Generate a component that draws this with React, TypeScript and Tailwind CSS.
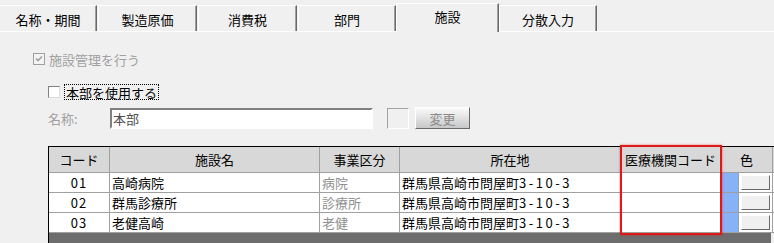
import type { ReactNode } from "react";

const rows = [
  { code: "01", name: "高崎病院", kind: "病院", addr: "群馬県高崎市問屋町", num: "3-10-3" },
  { code: "02", name: "群馬診療所", kind: "診療所", addr: "群馬県高崎市問屋町", num: "3-10-3" },
  { code: "03", name: "老健高崎", kind: "老健", addr: "群馬県高崎市問屋町", num: "3-10-3" },
];

function Tab({ label, w, ml = 0 }: { label: string; w: number; ml?: number }) {
  return (
    <div
      className="h-[26px] flex items-center justify-center border-t border-l border-white border-r border-r-[#696969] shadow-[inset_-1px_0_0_#a0a0a0]"
      style={{ width: w, marginLeft: ml }}
    >
      <span className="pt-[1px]">{label}</span>
    </div>
  );
}

function Cell({ w, className = "", children }: { w: number; className?: string; children?: ReactNode }) {
  return (
    <div
      className={`h-full shrink-0 flex items-center border-r border-[#a0a0a0] ${className}`}
      style={{ width: w }}
    >
      {children}
    </div>
  );
}

export default function App() {
  return (
    <div
      className="w-[774px] h-[243px] overflow-hidden bg-[#f0f0f0] text-[13px] leading-none text-black"
      style={{ fontFamily: '"Noto Sans CJK JP", "Noto Sans", sans-serif' }}
    >
      {/* tab strip */}
      <div className="h-[32px] flex items-end border-b border-white">
        <Tab label="名称・期間" w={98} ml={-1} />
        <Tab label="製造原価" w={99} ml={1} />
        <Tab label="消費税" w={99} ml={1} />
        <Tab label="部門" w={98} ml={1} />
        <div className="relative z-10 -mb-px h-[29px] w-[103px] flex justify-center pt-[6px] bg-[#f0f0f0] border-t border-l border-white border-r border-r-[#696969] shadow-[inset_-1px_0_0_#a0a0a0]">
          施設
        </div>
        <Tab label="分散入力" w={98} />
      </div>

      {/* 施設管理を行う */}
      <div className="mt-[21px] ml-[33px] flex items-center h-[12px] gap-[4px] text-[#a0a0a0]">
        <div className="w-[12px] h-[12px] border border-[#a0a0a0] bg-[#f4f4f4] flex items-center justify-center">
          <svg width="8" height="8" viewBox="0 0 8 8">
            <path d="M1 3.5 L3 5.5 L7 1.5" stroke="#a0a0a0" strokeWidth="1.6" fill="none" />
          </svg>
        </div>
        <span>施設管理を行う</span>
      </div>

      {/* 本部を使用する */}
      <div className="mt-[19px] ml-[48px] flex items-center h-[16px] gap-[4px]">
        <div className="w-[12px] h-[12px] border border-[#808080] border-r-[#dcdcdc] border-b-[#dcdcdc] bg-white" />
        <span className="h-[16px] px-[1px] flex items-center border border-dotted border-black">本部を使用する</span>
      </div>

      {/* 名称 */}
      <div className="mt-[8px] ml-[48px] flex items-center h-[21px]">
        <span className="w-[62px] text-[#a0a0a0]">名称:</span>
        <div className="w-[263px] h-[21px] bg-white border-2 border-t-[#808080] border-l-[#808080] border-r-white border-b-white flex items-center pl-[1px] text-[#505050]">
          本部
        </div>
        <div className="ml-[14px] w-[22px] h-[21px] border border-t-[#a0a0a0] border-l-[#a0a0a0] border-r-white border-b-white" />
        <div className="ml-[6px] -mt-[1px] w-[55px] h-[22px] flex items-center justify-center bg-gradient-to-b from-[#fbfbfb] to-[#c8c8c8] border border-t-white border-l-white border-r-[#696969] border-b-[#696969] text-[#8a8a8a]">
          変更
        </div>
      </div>

      {/* table */}
      <div className="relative mt-[17px] ml-[48px] w-[726px] border-t border-l border-black">
        <div className="h-[26px] flex bg-[#d8d8d8] border-b border-[#a0a0a0]">
          <Cell w={61} className="justify-center">コード</Cell>
          <Cell w={210} className="justify-center">施設名</Cell>
          <Cell w={80} className="justify-center">事業区分</Cell>
          <Cell w={221} className="justify-center">所在地</Cell>
          <Cell w={100} className="justify-center">医療機関コード</Cell>
          <Cell w={52} className="justify-center">色</Cell>
        </div>
        {rows.map((r) => (
          <div key={r.code} className="h-[20px] flex bg-white border-b border-[#a0a0a0]">
            <Cell w={61} className="justify-center tracking-[1px]">{r.code}</Cell>
            <Cell w={210} className="pl-[2px]">{r.name}</Cell>
            <Cell w={80} className="pl-[2px] text-[#909090]">{r.kind}</Cell>
            <Cell w={221} className="pl-[2px]">
              {r.addr}
              <span className="tracking-[2.5px]">{r.num}</span>
            </Cell>
            <Cell w={100} />
            <Cell w={18} className="bg-[#88b2f8]" />
            <Cell w={34} className="pl-[2px]">
              <div className="w-[29px] h-[15px] bg-[#f0f0f0] border border-t-white border-l-white border-r-[#696969] border-b-[#696969]" />
            </Cell>
          </div>
        ))}
        <div className="h-[12px] w-[722px] bg-[#6d6d6d]" />

        {/* highlight box */}
        <div className="absolute left-[571px] -top-[2px] w-[102px] h-[90px] border-2 border-[#e01818] shadow-[0_0_2px_rgba(224,24,24,0.6)] pointer-events-none" />
      </div>
    </div>
  );
}
